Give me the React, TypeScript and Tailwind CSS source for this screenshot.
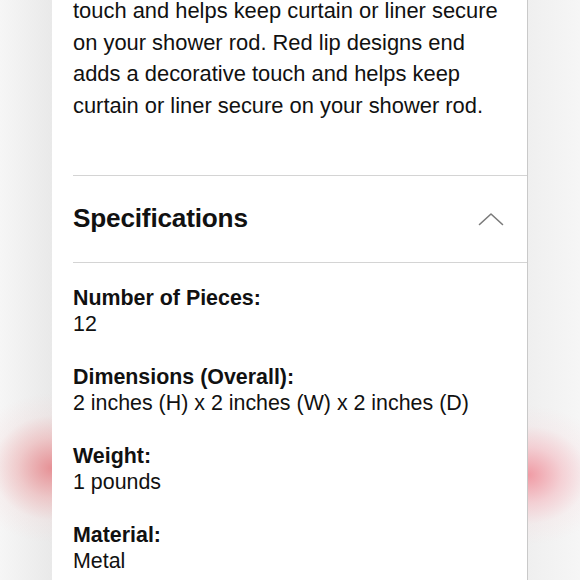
import React from 'react';

const specs = [
  { label: 'Number of Pieces:', value: '12' },
  { label: 'Dimensions (Overall):', value: '2 inches (H) x 2 inches (W) x 2 inches (D)' },
  { label: 'Weight:', value: '1 pounds' },
  { label: 'Material:', value: 'Metal' },
];

const ChevronUp = () => (
  <svg width="26" height="14" viewBox="0 0 26 14" fill="none">
    <path d="M1.5 12.5 L13 2 L24.5 12.5" stroke="#7a7a7a" strokeWidth="1.6" strokeLinecap="round" strokeLinejoin="round" />
  </svg>
);

const App: React.FC = () => {
  return (
    <div
      className="flex h-[580px] w-[580px] overflow-hidden bg-[#f3f3f3] text-[#111]"
      style={{ fontFamily: '"Liberation Sans", Arial, sans-serif' }}
    >
      <div className="w-[52px] shrink-0 bg-[radial-gradient(ellipse_85px_75px_at_100%_468px,rgba(230,140,145,0.95),rgba(238,170,172,0.55)_40%,rgba(245,210,210,0.2)_70%,transparent_100%),linear-gradient(to_right,#f6f6f6,#e9e9e9)]" />

      <div className="flex w-[476px] shrink-0 flex-col border-r border-[#c9c9c9] bg-white">
        <div className="flex flex-col gap-[9.5px] pl-[21px] text-[21.9px] leading-[22px]">
          <p className="whitespace-nowrap">touch and helps keep curtain or liner secure</p>
          <p className="whitespace-nowrap">on your shower rod. Red lip designs end</p>
          <p className="whitespace-nowrap">adds a decorative touch and helps keep</p>
          <p className="whitespace-nowrap">curtain or liner secure on your shower rod.</p>
        </div>

        <div className="ml-[21px] mt-[58px] border-t border-[#d4d4d4]">
          <div className="flex h-[86px] items-center justify-between pr-[23px]">
            <h2 className="text-[26.2px] font-bold tracking-[-0.2px]">Specifications</h2>
            <ChevronUp />
          </div>
        </div>

        <div className="ml-[21px] border-t border-[#d4d4d4] pt-[22px]">
          <div className="flex flex-col gap-[27px] text-[21.4px] leading-[26px]">
            {specs.map((s) => (
              <div key={s.label}>
                <div className="font-bold">{s.label}</div>
                <div>{s.value}</div>
              </div>
            ))}
          </div>
        </div>
      </div>

      <div className="w-[52px] shrink-0 bg-[radial-gradient(ellipse_85px_70px_at_0%_475px,rgba(240,150,160,0.95),rgba(245,180,188,0.55)_40%,rgba(248,215,218,0.2)_70%,transparent_100%),linear-gradient(to_right,#efefef,#f6f6f6)]" />
    </div>
  );
};

export default App;
